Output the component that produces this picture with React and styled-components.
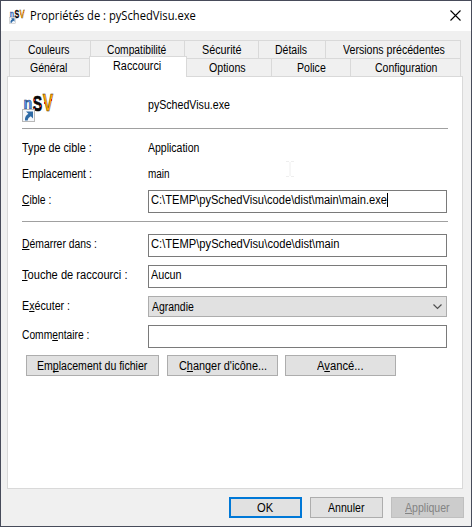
import React from "react";
import styled, { createGlobalStyle } from "styled-components";

const GlobalStyle = createGlobalStyle`
  *, *::before, *::after { box-sizing: border-box; }
  body { margin: 0; background: #f0f0f0; }
`;

const Window = styled.main`
  width: 472px;
  height: 527px;
  border: 1px solid #474b5a;
  background: #f0f0f0;
  color: #000;
  font: 12px/14px "Liberation Sans", Arial, sans-serif;
  display: flex;
  flex-direction: column;
`;

const TitleBar = styled.header`
  height: 30px;
  flex: none;
  background: #fff;
  display: flex;
  align-items: flex-start;
  padding: 6px 10px 0 8px;
`;

const TitleText = styled.h1`
  margin: 1px 0 0 5px;
  width: 166px;
  flex: none;
  font: 400 12px/16px "Open Sans", "Noto Sans", sans-serif;
  white-space: pre;
  transform: scaleX(0.932);
  transform-origin: left;
`;

const CloseButton = styled.button`
  margin: 3px 0 0 auto;
  padding: 0;
  border: 0;
  background: none;
  width: 11px;
  height: 11px;
  svg { display: block; }
`;

/* Condensed interface text: $w is the advance width, $k the horizontal ratio. */
const Text = styled.span`
  display: block;
  flex: none;
  width: ${(p) => p.$w}px;
  height: 14px;
  white-space: pre;
  transform: scaleX(${(p) => p.$k});
  transform-origin: left;
`;

const Key = styled.span`
  text-decoration: underline;
  text-decoration-thickness: 1px;
  text-underline-offset: 1px;
  text-decoration-skip-ink: none;
`;

const Tabs = styled.nav`
  padding: 9px 0 0 8px;
  display: flex;
  flex-direction: column;
  flex: none;
`;

const TabRow = styled.div`
  height: 18px;
  display: grid;
  grid-template-columns: ${(p) => p.$cols};
  width: 452px;
  border-right: 1px solid #d9d9d9;
`;

const Tab = styled.button`
  font: inherit;
  color: inherit;
  border: 0 solid #d9d9d9;
  border-width: 1px 0 0 ${(p) => (p.$joined ? 0 : 1)}px;
  background: #f0f0f0;
  padding: 2px 0 0 ${(p) => p.$pad}px;
  display: flex;
  align-items: flex-start;
`;

const ActiveTab = styled(Tab)`
  position: relative;
  z-index: 1;
  margin: -2px 0 -1px;
  border-width: 1px 1px 0;
  background: #fff;
`;

const Panel = styled.section`
  position: relative;
  margin-left: 6px;
  width: 456px;
  height: 413px;
  flex: none;
  border: 1px solid #d9d9d9;
  background: #fff;
  padding: 0 15px 0 14px;
`;

const Rule = styled.hr`
  width: 426px;
  height: 1px;
  margin: ${(p) => p.$top}px 0 ${(p) => p.$bottom}px;
  border: 0;
  background: #a0a0a0;
`;

const Row = styled.div`
  display: grid;
  grid-template-columns: 126px 299px;
  align-items: start;
  height: ${(p) => p.$h}px;
`;

const Cell = styled.div`
  padding-top: ${(p) => p.$top}px;
`;

const Field = styled.div`
  height: 23px;
  border: 1px solid #7a7a7a;
  background: #fff;
  padding: 2px 0 0 2px;
  display: flex;
`;

const Select = styled.div`
  height: 21px;
  border: 1px solid #adadad;
  background: #e1e1e1;
  padding: 3px 4px 0 3px;
  display: flex;
  justify-content: space-between;
  svg { margin-top: 3px; }
`;

const Caret = styled.i`
  width: 1px;
  height: 14px;
  background: #000;
`;

const Button = styled.button`
  font: inherit;
  width: ${(p) => p.$width}px;
  height: 21px;
  padding: 0;
  display: flex;
  align-items: center;
  justify-content: center;
  color: #000;
  background: #e1e1e1;
  border: 1px solid #adadad;
  &:disabled { color: #838383; background: #ccc; border-color: #bfbfbf; }
`;

const DefaultButton = styled(Button)`
  border: 2px solid #0078d7;
`;

const ActionRow = styled.div`
  display: flex;
  padding-left: 4px;
  gap: 8px;
  button + button + button { margin-left: -1px; }
`;

const Footer = styled.footer`
  display: flex;
  justify-content: flex-end;
  gap: 8px;
  padding: 8px 7px 0 0;
`;

const PointerMark = styled.svg`
  position: absolute;
  left: 278px;
  top: 84px;
`;

const IconSvg = styled.svg`
  display: block;
  flex: none;
`;

function AppIcon({ size }) {
  return (
    <IconSvg width={size} height={size * 1.0625} viewBox="0 -5 32 34" aria-hidden="true">
      <g fontFamily="Liberation Sans, Arial, sans-serif" fontWeight="700">
        <text transform="translate(1.6 15) scale(.84 1)" fontSize="17" fill="#5798f0" stroke="#17345f" strokeWidth="0.6">n</text>
        <text transform="translate(10.8 17.2) scale(.63 1)" fontSize="22.5" fill="#080808" stroke="#080808" strokeWidth="0.7">S</text>
        <text transform="translate(20.8 17.4) scale(.68 1)" fontSize="23" fill="#ffa800" stroke="#2b1700" strokeWidth="0.5">V</text>
      </g>
      <path d="M12 5h1v2h-1zM18 11h1v2h-1zM12 14h1v1h-1zM22 8h1v2h-1zM29 5h1v2h-1z" fill="#e31b12" />
      <rect x="0.5" y="15.5" width="12" height="12" fill="#f5f7fa" stroke="#b8b8b8" />
      <path d="M4 17.5h7v7l-2.2-2.2c-2 1.200-2.900 2.300-3.100 4.200H3c-.3-3.500.9-5.300 3.400-6.800z" fill="#2e6aa5" />
    </IconSvg>
  );
}

export default function App() {
  return (
    <>
      <GlobalStyle />
      <Window>
        <TitleBar>
          <AppIcon size={16} />
          <TitleText>Propriétés de : pySchedVisu.exe</TitleText>
          <CloseButton aria-label="Fermer">
            <svg width="11" height="11" viewBox="0 0 11 11">
              <path d="M.5.5l10 10M10.5.5l-10 10" stroke="#000" strokeWidth="1.1" fill="none" />
            </svg>
          </CloseButton>
        </TitleBar>

        <Tabs>
          <TabRow $cols="81px 94px 74px 67px 135px">
            <Tab $pad={18}><Text $w={42} $k={0.865}>Couleurs</Text></Tab>
            <Tab $pad={16}><Text $w={60} $k={0.855}>Compatibilité</Text></Tab>
            <Tab $pad={17}><Text $w={40} $k={0.9}>Sécurité</Text></Tab>
            <Tab $pad={16}><Text $w={33} $k={0.875}>Détails</Text></Tab>
            <Tab $pad={17}><Text $w={102} $k={0.883}>Versions précédentes</Text></Tab>
          </TabRow>
          <TabRow $cols="80px 98px 84px 79px 110px">
            <Tab $pad={20}><Text $w={38} $k={0.875}>Général</Text></Tab>
            <ActiveTab $pad={23}><Text $w={49} $k={0.905}>Raccourci</Text></ActiveTab>
            <Tab $joined $pad={22}><Text $w={37} $k={0.885}>Options</Text></Tab>
            <Tab $pad={25}><Text $w={29} $k={0.88}>Police</Text></Tab>
            <Tab $pad={24}><Text $w={63} $k={0.875}>Configuration</Text></Tab>
          </TabRow>
        </Tabs>

        <Panel>
          <Row $h={51}>
            <Cell $top={12}><AppIcon size={32} /></Cell>
            <Cell $top={21}><Text $w={83} $k={0.885}>pySchedVisu.exe</Text></Cell>
          </Row>
          <Rule $top={0} $bottom={0} />
          <Row $h={31}>
            <Cell $top={12}><Text $w={70} $k={0.9}>Type de cible :</Text></Cell>
            <Cell $top={12}><Text $w={52} $k={0.875}>Application</Text></Cell>
          </Row>
          <Row $h={30}>
            <Cell $top={7}><Text $w={70} $k={0.872}>Emplacement :</Text></Cell>
            <Cell $top={7}><Text $w={22} $k={0.83}>main</Text></Cell>
          </Row>
          <Row $h={23}>
            <Cell $top={3}><Text $w={30} $k={0.86}><Key>C</Key>ible :</Text></Cell>
            <Field>
              <Text $w={236} $k={0.927}>{"C:\\TEMP\\pySchedVisu\\code\\dist\\main\\main.exe"}</Text>
              <Caret />
            </Field>
          </Row>
          <Rule $top={8} $bottom={12} />
          <Row $h={31}>
            <Cell $top={3}><Text $w={76} $k={0.865}><Key>D</Key>émarrer dans :</Text></Cell>
            <Field><Text $w={189} $k={0.93}>{"C:\\TEMP\\pySchedVisu\\code\\dist\\main"}</Text></Field>
          </Row>
          <Row $h={31}>
            <Cell $top={3}><Text $w={106} $k={0.925}><Key>T</Key>ouche de raccourci :</Text></Cell>
            <Field><Text $w={31} $k={0.9}>Aucun</Text></Field>
          </Row>
          <Row $h={29}>
            <Cell $top={3}><Text $w={49} $k={0.89}>E<Key>x</Key>écuter :</Text></Cell>
            <Select>
              <Text $w={42} $k={0.87}>Agrandie</Text>
              <svg width="9" height="8" viewBox="0 0 9 8">
                <path d="M.5 1.5l4 4 4-4" fill="none" stroke="#505050" strokeWidth="1.2" />
              </svg>
            </Select>
          </Row>
          <Row $h={30}>
            <Cell $top={3}><Text $w={68} $k={0.855}>Comm<Key>e</Key>ntaire :</Text></Cell>
            <Field />
          </Row>
          <ActionRow>
            <Button $width={133}><Text $w={111} $k={0.88}>Em<Key>p</Key>lacement du fichier</Text></Button>
            <Button $width={111}><Text $w={88} $k={0.907}>C<Key>h</Key>anger d'icône...</Text></Button>
            <Button $width={111}><Text $w={47} $k={0.935}>A<Key>v</Key>ancé...</Text></Button>
          </ActionRow>
          <PointerMark width="8" height="16" viewBox="0 0 8 16" aria-hidden="true">
            <path d="M0 .5h3M5 .5h3M4 1v14M0 15.5h3M5 15.5h3" stroke="#eee" fill="none" />
          </PointerMark>
        </Panel>

        <Footer>
          <DefaultButton $width={73}><Text $w={17} $k={0.93}>OK</Text></DefaultButton>
          <Button $width={73}><Text $w={37} $k={0.88}>Annuler</Text></Button>
          <Button $width={73} disabled><Text $w={45} $k={0.88}><Key>A</Key>ppliquer</Text></Button>
        </Footer>
      </Window>
    </>
  );
}
